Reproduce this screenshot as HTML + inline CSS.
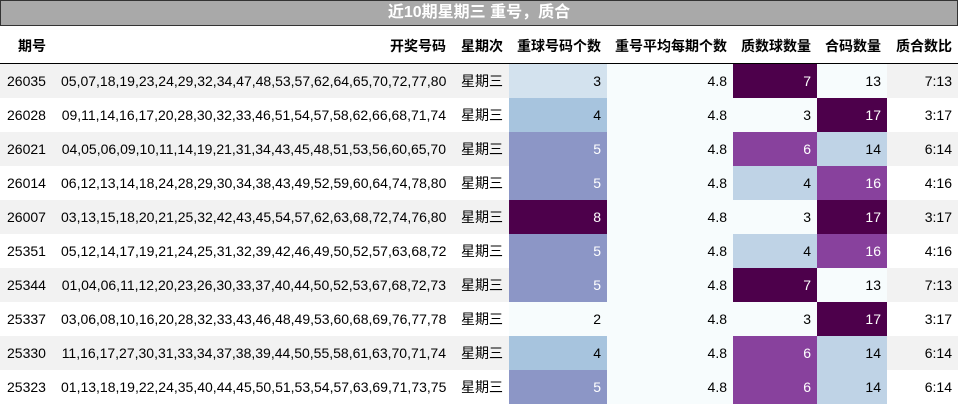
<!DOCTYPE html>
<html><head><meta charset="utf-8"><style>
body{margin:0;width:958px;height:403px;background:#fff;font-family:"Liberation Sans","Noto Sans CJK SC",sans-serif;font-size:14px;color:#000;overflow:hidden}
.title{position:absolute;left:0;top:0;width:956px;height:24px;background:#a9a9a9;border:1px solid #333;color:#fff;font-weight:bold;font-size:16px;text-align:center;line-height:24px}
table{position:absolute;left:0;top:26px;border-collapse:collapse;table-layout:fixed;width:958px}
th{font-weight:bold;height:35px;border-bottom:1.5px solid #000;text-align:right;padding:2px 6px 0 6px;white-space:nowrap}
td{height:34px;padding:0 6px;text-align:right;white-space:nowrap}
tr.o td{background:#f2f2f2}
td.f{text-align:left;padding-left:7px}
.w{color:#fff}
</style></head><body>
<div class="title">近10期星期三 重号，质合</div>
<table>
<colgroup><col style="width:55px"><col style="width:397px"><col style="width:57px"><col style="width:98px"><col style="width:126px"><col style="width:84px"><col style="width:70px"><col style="width:71px"></colgroup>
<tr><th style="text-align:left;padding-left:18px">期号</th><th>开奖号码</th><th>星期次</th><th>重球号码个数</th><th>重号平均每期个数</th><th>质数球数量</th><th>合码数量</th><th>质合数比</th></tr>
<tr class="o"><td class="f">26035</td><td>05,07,18,19,23,24,29,32,34,47,48,53,57,62,64,65,70,72,77,80</td><td>星期三</td><td style="background:#d3e2ee">3</td><td style="background:#f7fcfd">4.8</td><td class="w" style="background:#4d004b">7</td><td style="background:#f7fcfd">13</td><td>7:13</td></tr>
<tr><td class="f">26028</td><td>09,11,14,16,17,20,28,30,32,33,46,51,54,57,58,62,66,68,71,74</td><td>星期三</td><td style="background:#a7c4de">4</td><td style="background:#f7fcfd">4.8</td><td style="background:#f7fcfd">3</td><td class="w" style="background:#4d004b">17</td><td>3:17</td></tr>
<tr class="o"><td class="f">26021</td><td>04,05,06,09,10,11,14,19,21,31,34,43,45,48,51,53,56,60,65,70</td><td>星期三</td><td class="w" style="background:#8c96c6">5</td><td style="background:#f7fcfd">4.8</td><td class="w" style="background:#88419d">6</td><td style="background:#bfd3e6">14</td><td>6:14</td></tr>
<tr><td class="f">26014</td><td>06,12,13,14,18,24,28,29,30,34,38,43,49,52,59,60,64,74,78,80</td><td>星期三</td><td class="w" style="background:#8c96c6">5</td><td style="background:#f7fcfd">4.8</td><td style="background:#bfd3e6">4</td><td class="w" style="background:#88419d">16</td><td>4:16</td></tr>
<tr class="o"><td class="f">26007</td><td>03,13,15,18,20,21,25,32,42,43,45,54,57,62,63,68,72,74,76,80</td><td>星期三</td><td class="w" style="background:#4d004b">8</td><td style="background:#f7fcfd">4.8</td><td style="background:#f7fcfd">3</td><td class="w" style="background:#4d004b">17</td><td>3:17</td></tr>
<tr><td class="f">25351</td><td>05,12,14,17,19,21,24,25,31,32,39,42,46,49,50,52,57,63,68,72</td><td>星期三</td><td class="w" style="background:#8c96c6">5</td><td style="background:#f7fcfd">4.8</td><td style="background:#bfd3e6">4</td><td class="w" style="background:#88419d">16</td><td>4:16</td></tr>
<tr class="o"><td class="f">25344</td><td>01,04,06,11,12,20,23,26,30,33,37,40,44,50,52,53,67,68,72,73</td><td>星期三</td><td class="w" style="background:#8c96c6">5</td><td style="background:#f7fcfd">4.8</td><td class="w" style="background:#4d004b">7</td><td style="background:#f7fcfd">13</td><td>7:13</td></tr>
<tr><td class="f">25337</td><td>03,06,08,10,16,20,28,32,33,43,46,48,49,53,60,68,69,76,77,78</td><td>星期三</td><td style="background:#f7fcfd">2</td><td style="background:#f7fcfd">4.8</td><td style="background:#f7fcfd">3</td><td class="w" style="background:#4d004b">17</td><td>3:17</td></tr>
<tr class="o"><td class="f">25330</td><td>11,16,17,27,30,31,33,34,37,38,39,44,50,55,58,61,63,70,71,74</td><td>星期三</td><td style="background:#a7c4de">4</td><td style="background:#f7fcfd">4.8</td><td class="w" style="background:#88419d">6</td><td style="background:#bfd3e6">14</td><td>6:14</td></tr>
<tr><td class="f">25323</td><td>01,13,18,19,22,24,35,40,44,45,50,51,53,54,57,63,69,71,73,75</td><td>星期三</td><td class="w" style="background:#8c96c6">5</td><td style="background:#f7fcfd">4.8</td><td class="w" style="background:#88419d">6</td><td style="background:#bfd3e6">14</td><td>6:14</td></tr>
</table>
</body></html>
